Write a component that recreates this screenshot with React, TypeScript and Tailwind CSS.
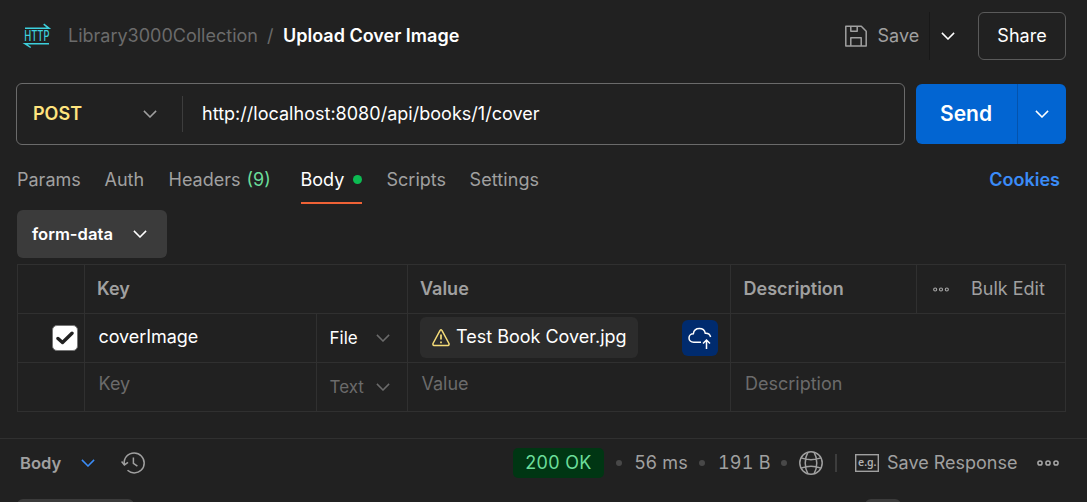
import React from "react";

function Chevron({ className }: { className: string }) {
  return (
    <svg viewBox="0 0 14 8" fill="none" stroke="currentColor" strokeWidth="1.5" className={`h-2 w-3.5 shrink-0 ${className}`}>
      <path d="M0.9 0.9 7 7 13.1 0.9" />
    </svg>
  );
}

function HttpIcon() {
  return (
    <svg viewBox="0 0 26 26" fill="none" stroke="#3dd0dd" strokeWidth="1.5" className="h-[26px] w-[26px] shrink-0 overflow-visible">
      <path d="M1 5.3H25L19.7 1.2M25 20.7H1L6.7 24.5" />
      <text x="0.2" y="18" fill="#3dd0dd" stroke="none" fontSize="14" textLength="25.2" lengthAdjust="spacingAndGlyphs" className="font-['Inter'] font-medium">
        HTTP
      </text>
    </svg>
  );
}

function SaveIcon() {
  return (
    <svg viewBox="0 0 22 22" fill="none" stroke="#a0a0a0" strokeWidth="1.5" strokeLinejoin="round" className="h-[22px] w-[22px] shrink-0">
      <path d="M0.8 1.2H16.3L21.2 6.3V21H0.8ZM5.8 1.2V6.3H12.2V1.2M5.8 21V12.8H16.2V21" />
    </svg>
  );
}

function WarningIcon() {
  return (
    <svg viewBox="0 0 18 18" fill="none" stroke="#f5dc78" strokeWidth="1.5" strokeLinejoin="round" className="h-[18px] w-[18px] shrink-0">
      <path d="M8.1 1.4Q9 0.3 9.9 1.4L17 14.5Q17.4 16.4 16 16.5H2Q0.6 16.4 1 14.5Z" />
      <path d="M9 5.4V10.6M9 12.5V14.2" strokeWidth="1.7" />
    </svg>
  );
}

function CloudIcon() {
  return (
    <svg viewBox="0 0 24 24" fill="none" stroke="#fff" strokeWidth="1.5" className="h-6 w-6 shrink-0">
      <path d="M13 16.2H5.7C2.9 16.2 1 14.3 1 12C1 9.6 2.9 7.8 5.3 7.8C5.8 4.4 8.1 2.6 11.4 2.6C14.5 2.6 16.7 4.4 17.3 7.3C20.1 7.1 22 8.4 22.6 11" />
      <path d="M18.5 23V14.2M15 17.5 18.5 14 22 17.5" />
    </svg>
  );
}

function HistoryIcon() {
  return (
    <svg viewBox="0 0 24 22" fill="none" stroke="#a0a0a0" strokeWidth="1.5" className="h-[22px] w-6 shrink-0">
      <path d="M3.3 12.5C2.4 6 7 1.1 13.2 1.1C18.8 1.1 23.2 5.4 23.2 11C23.2 16.6 18.8 20.9 13.2 20.9C10.5 20.9 8.3 20 6.5 18.3" />
      <path d="M0.6 9.6 3.4 12.9 7 10.3M12.4 5.6V11.4L16.4 14.2" />
    </svg>
  );
}

function GlobeIcon() {
  return (
    <svg viewBox="0 0 24 24" fill="none" stroke="#a0a0a0" strokeWidth="1.5" className="h-6 w-6 shrink-0">
      <circle cx="12" cy="12" r="11.2" />
      <path d="M9 1.2C5.3 7.5 5.3 16.5 9 22.8M15 1.2C18.7 7.5 18.7 16.5 15 22.8M2 6.9C8 9 16 9 22 6.9M2 17.1C8 15 16 15 22 17.1" />
    </svg>
  );
}

function Dots({ className }: { className: string }) {
  return (
    <svg viewBox="0 0 22 6" fill="none" stroke="#a8a8a8" strokeWidth="1.5" className={`shrink-0 ${className}`}>
      <circle cx="3" cy="3" r="2.1" />
      <circle cx="11" cy="3" r="2.1" />
      <circle cx="19" cy="3" r="2.1" />
    </svg>
  );
}

function ExampleIcon() {
  return (
    <svg viewBox="0 0 24 18" fill="none" stroke="#a0a0a0" strokeWidth="1.4" className="h-[18px] w-6 shrink-0">
      <rect x="0.7" y="0.7" width="22.6" height="16.6" />
      <text x="3" y="12" fill="#b0b0b0" stroke="none" fontSize="11" textLength="18.5" lengthAdjust="spacingAndGlyphs" className="font-['Noto_Sans'] font-semibold">
        e.g.
      </text>
    </svg>
  );
}

const Dot = ({ className }: { className: string }) => <span className={`h-1.5 w-1.5 shrink-0 rounded-full bg-[#484848] ${className}`} />;

export default function App() {
  return (
    <div className="flex h-[502px] w-[1087px] flex-col overflow-hidden whitespace-nowrap bg-[#212121] font-['Inter',sans-serif] text-[18px] leading-6 text-[#a0a0a0]">
      <header className="flex h-[72px] shrink-0 items-center pl-6 pr-[21px]">
        <HttpIcon />
        <nav className="ml-[18px] flex">
          <span className="w-[199px] text-[#6b6b6b]">Library3000Collection</span>
          <span className="w-4 text-[#6b6b6b]">/</span>
          <span className="font-semibold text-white">Upload Cover Image</span>
        </nav>
        <div className="ml-auto flex items-center">
          <SaveIcon />
          <span className="ml-[10.5px] w-[51.5px]">Save</span>
          <span className="h-12 w-px bg-[#181818]" />
          <Chevron className="ml-[11px] text-white" />
          <button className="ml-[23px] h-12 w-[88px] rounded-md border border-[#5a5a5a] text-white">Share</button>
        </div>
      </header>

      <div className="mt-[11px] flex h-[62px] shrink-0 items-center pl-4 pr-[21px]">
        <div className="flex h-full w-[889px] items-center rounded-md border border-[#6b6b6b] pl-4">
          <span className="w-[110px] font-semibold text-[#ffe47e]">POST</span>
          <Chevron className="text-[#a0a0a0]" />
          <span className="ml-[25px] h-9 w-px bg-[#3d3d3d]" />
          <span className="ml-[19px] tracking-[0.02px] text-white">http://localhost:8080/api/books/1/cover</span>
        </div>
        <div className="ml-[11px] flex h-[60px] w-[150px] items-center overflow-hidden rounded-md bg-[#0265d2] text-white">
          <span className="w-[100px] text-center text-[21px] font-semibold">Send</span>
          <span className="ml-px h-full w-px bg-[#0453ad]" />
          <Chevron className="ml-[17px]" />
        </div>
      </div>

      <nav className="mt-[11px] flex h-12 shrink-0 items-center pl-[17px] pr-[27px]">
        <span className="w-[87.5px]">Params</span>
        <span className="w-16">Auth</span>
        <span className="w-[78px]">Headers</span>
        <span className="w-[54px] text-[#6bdd9a]">(9)</span>
        <span className="flex h-full w-[61.5px] items-center justify-between border-b-2 border-[#ef6236] pt-0.5 text-white">
          Body
          <span className="mb-px h-[9px] w-[9px] rounded-full bg-[#0cbb52]" />
        </span>
        <span className="ml-[24.5px] w-[83px]">Scripts</span>
        <span className="tracking-[0.1px]">Settings</span>
        <span className="ml-auto font-semibold text-[#3b8cf7]">Cookies</span>
      </nav>

      <button className="ml-[17px] mt-1.5 flex h-12 w-[150px] shrink-0 items-center rounded-md bg-[#3b3b3b] pl-[15px] font-semibold text-white">
        <span className="w-[101px] text-left text-[16.6px]">form-data</span>
        <Chevron className="text-white" />
      </button>

      <section className="ml-[17px] mt-1.5 w-[1049px] shrink-0 border-l border-t border-[#303030]">
        <div className="grid h-[49px] grid-cols-[67px_323px_323px_186px_149px] font-semibold *:flex *:items-center *:border-b *:border-r *:border-[#303030]">
          <div />
          <div className="pl-3">Key</div>
          <div className="pl-3">Value</div>
          <div className="pl-[12.5px]">Description</div>
          <div className="pl-4 font-normal">
            <Dots className="h-[5px] w-4" />
            <span className="ml-[22px]">Bulk Edit</span>
          </div>
        </div>
        <div className="grid h-[49px] grid-cols-[67px_232px_91px_323px_335px] text-white *:flex *:items-center *:border-b *:border-r *:border-[#303030]">
          <div className="pl-[34px]">
            <span className="flex h-[26px] w-[26px] items-center justify-center rounded-[5px] border border-[#777] bg-white">
              <svg viewBox="0 0 18 14" fill="none" stroke="#212121" strokeWidth="3.4" strokeLinecap="round" strokeLinejoin="round" className="h-3.5 w-[18px]">
                <path d="M2 7.5 6.5 11.5 16 2.2" />
              </svg>
            </span>
          </div>
          <div className="pb-0.5 pl-[13.5px] tracking-[-0.06px]">coverImage</div>
          <div className="pl-[12.5px]">
            <span className="w-[46.5px] text-[17px]">File</span>
            <Chevron className="text-[#6b6b6b]" />
          </div>
          <div className="pl-3">
            <span className="mb-px flex h-[41px] w-[218px] items-center rounded-md bg-[#2c2c2c] pl-3">
              <span className="pt-px">
                <WarningIcon />
              </span>
              <span className="ml-1.5 pb-px">Test Book Cover.jpg</span>
            </span>
            <span className="ml-11 flex h-9 w-9 items-center justify-center rounded-md bg-[#002b6e]">
              <CloudIcon />
            </span>
          </div>
          <div />
        </div>
        <div className="grid h-[49px] grid-cols-[67px_232px_91px_323px_335px] text-[#6b6b6b] *:flex *:items-center *:border-b *:border-r *:border-[#303030]">
          <div />
          <div className="pb-1.5 pl-[13.5px]">Key</div>
          <div className="pl-[12.5px]">
            <span className="w-[46.5px] text-[17px]">Text</span>
            <Chevron className="text-[#6b6b6b]" />
          </div>
          <div className="pb-1.5 pl-[13.5px]">Value</div>
          <div className="pb-1.5 pl-3.5">Description</div>
        </div>
      </section>

      <footer className="mt-[26px] flex h-[49px] shrink-0 items-center border-t border-[#303030] pl-5">
        <span className="w-[61px] text-[16.6px] font-semibold">Body</span>
        <Chevron className="text-[#3b8cf7]" />
        <span className="ml-[26px]">
          <HistoryIcon />
        </span>
        <span className="ml-[368px] flex h-[30px] w-[91px] items-center justify-center rounded-[5px] bg-[#003613] tracking-[0.3px] text-[#6bdd9a]">200 OK</span>
        <Dot className="ml-3" />
        <span className="ml-[12.5px] w-[64.5px] tracking-[0.2px]">56 ms</span>
        <Dot className="" />
        <span className="ml-[13px] w-[63px] tracking-[0.2px] tabular-nums">191 B</span>
        <Dot className="" />
        <span className="ml-3">
          <GlobeIcon />
        </span>
        <span className="ml-3 h-[18px] w-0.5 bg-[#3d3d3d]" />
        <span className="ml-[18px]">
          <ExampleIcon />
        </span>
        <span className="ml-2 w-[150px]">Save Response</span>
        <Dots className="h-1.5 w-[22px]" />
      </footer>
      <div className="mt-3 flex h-[3px] shrink-0 pl-[17px]">
        <span className="h-3 w-[117px] shrink-0 rounded-md bg-[#3b3b3b]" />
        <span className="ml-[731px] h-3 w-9 rounded-md bg-[#3b3b3b]" />
      </div>
    </div>
  );
}
